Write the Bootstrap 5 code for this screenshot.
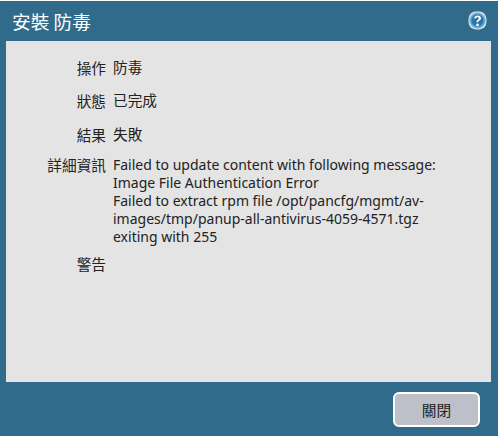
<!DOCTYPE html>
<html lang="zh-Hant">
<head>
<meta charset="utf-8">
<title>安裝 防毒</title>
<link href="https://cdn.jsdelivr.net/npm/bootstrap@5.3.0/dist/css/bootstrap.min.css" rel="stylesheet">
<style>
html,body{height:436px;overflow:hidden}
body{background:#fff;font-family:"Noto Sans","Noto Sans CJK TC",sans-serif;font-size:14px;color:#222;margin:0}
.dlg{height:435px;margin-top:1px;background:#306b8c}
.dlg-head{height:40px;padding-left:12px;padding-right:11px}
.dlg-title{font-size:18.67px;line-height:24px;color:#fff;font-family:"Noto Sans CJK TC",sans-serif;margin-top:8px}
.help-ico{margin-top:10px}
.dlg-body{height:341px;margin:0 7px 0 6px;background:#e4e4e4;padding-top:15px}
.info-row{margin-bottom:9px;line-height:18px}
.info-row.short-row{line-height:23px;margin-bottom:10.4px}
.short-row .info-val{font-size:14.67px}
.info-key{width:100px;text-align:right;font-size:14.67px;font-family:"Noto Sans CJK TC",sans-serif;flex:none}
.info-val{margin-left:7px;width:330px}
.dlg-foot{height:54px;padding:10px 18px 0 0}
.close-btn{width:87px;height:35px;background:#bdc0c9;border:2px solid #fff;border-radius:6px;font-size:14.67px;color:#222;padding:0;font-family:"Noto Sans CJK TC",sans-serif}
</style>
</head>
<body>
<div class="dlg d-flex flex-column">
  <div class="dlg-head d-flex align-items-start justify-content-between">
    <span class="dlg-title">安裝 防毒</span>
    <svg class="help-ico" width="19" height="19" viewBox="0 0 18 18"><defs><radialGradient id="g"><stop offset="0" stop-color="#1c66a0"/><stop offset=".6" stop-color="#2a7cb2"/><stop offset=".85" stop-color="#8fbdd6"/><stop offset="1" stop-color="#e3eef5"/></radialGradient></defs><rect x="0.5" y="0.5" width="17" height="17" rx="7" fill="url(#g)"/><path d="M5.8 7c.2-1.8 1.6-2.8 3.3-2.8 1.8 0 3.2 1 3.2 2.6 0 1.3-.9 1.9-1.7 2.4-.6.4-.9.7-.9 1.5H8c0-1.2.4-1.8 1.2-2.3.6-.4 1-.8 1-1.4 0-.6-.5-1-1.2-1-.8 0-1.2.4-1.4 1.2z" fill="#fff"/><circle cx="9" cy="13.2" r="1.3" fill="#fff"/></svg>
  </div>
  <div class="dlg-body">
    <div class="info-row short-row d-flex"><div class="info-key">操作</div><div class="info-val">防毒</div></div>
    <div class="info-row short-row d-flex"><div class="info-key">狀態</div><div class="info-val">已完成</div></div>
    <div class="info-row short-row d-flex"><div class="info-key">結果</div><div class="info-val">失敗</div></div>
    <div class="info-row d-flex"><div class="info-key">詳細資訊</div><div class="info-val">Failed to update content with following message:<br>Image File Authentication Error<br>Failed to extract rpm file /opt/pancfg/mgmt/av-images/tmp/panup-all-antivirus-4059-4571.tgz<br>exiting with 255</div></div>
    <div class="info-row d-flex"><div class="info-key">警告</div><div class="info-val"></div></div>
  </div>
  <div class="dlg-foot d-flex justify-content-end align-items-start">
    <button type="button" class="btn close-btn">關閉</button>
  </div>
</div>
<script src="https://cdn.jsdelivr.net/npm/bootstrap@5.3.0/dist/js/bootstrap.bundle.min.js"></script>
</body>
</html>
